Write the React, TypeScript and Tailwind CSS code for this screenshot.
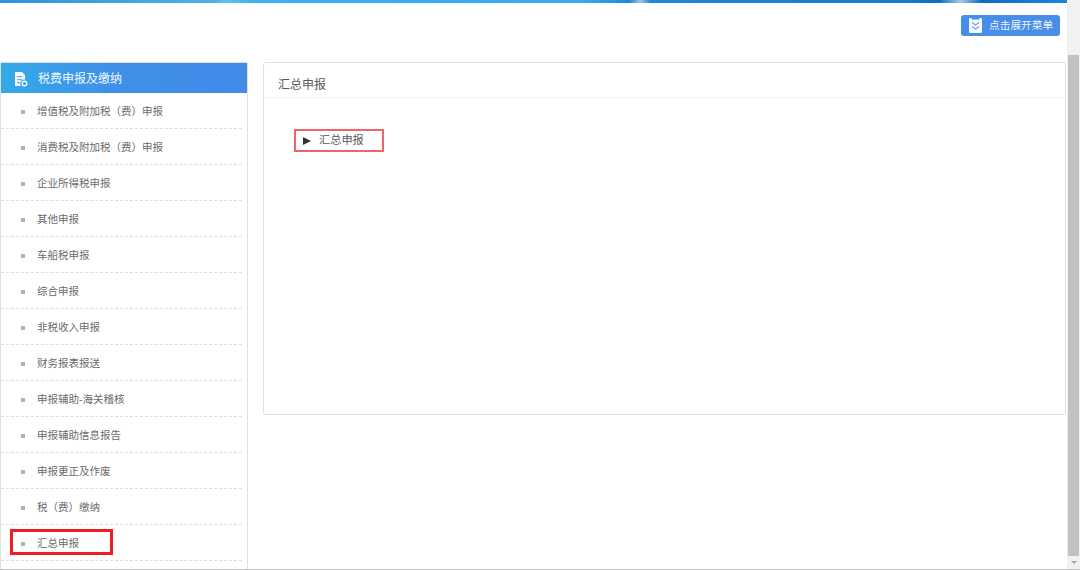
const items = [
  "增值税及附加税（费）申报",
  "消费税及附加税（费）申报",
  "企业所得税申报",
  "其他申报",
  "车船税申报",
  "综合申报",
  "非税收入申报",
  "财务报表报送",
  "申报辅助-海关稽核",
  "申报辅助信息报告",
  "申报更正及作废",
  "税（费）缴纳",
  "汇总申报",
];

const font = "font-['Liberation_Sans','Noto_Sans_CJK_SC',sans-serif]";

function DocIcon() {
  return (
    <svg width="14" height="15" viewBox="0 0 14 15" className="shrink-0">
      <path d="M1 0h7l3 3v4.6A4 4 0 0 0 7 14H1z" fill="#f4faff" />
      <rect x="3" y="4" width="5" height="1.2" fill="#6aaeea" />
      <rect x="3" y="7" width="5" height="1.2" fill="#6aaeea" />
      <rect x="3" y="10" width="3" height="1.2" fill="#6aaeea" />
      <circle cx="10.5" cy="11.5" r="2.3" fill="none" stroke="#f4faff" strokeWidth="1.4" />
    </svg>
  );
}

function ExpandIcon() {
  return (
    <svg width="13" height="15" viewBox="0 0 13 15" className="shrink-0">
      <path d="M1 0h1.5v1.5h8V0H12a1 1 0 0 1 1 1v13a1 1 0 0 1-1 1H1a1 1 0 0 1-1-1V1a1 1 0 0 1 1-1z" fill="#f6faff" />
      <path d="M3 4.5l3.5 2.5L10 4.5M3 8.5l3.5 2.5L10 8.5" fill="none" stroke="#6ea6ec" strokeWidth="1.3" />
    </svg>
  );
}

export default function App() {
  return (
    <div className={`${font} flex h-[570px] w-[1080px] overflow-hidden border-b border-[#c4c4c4] bg-white`}>
      <div className="flex min-w-0 flex-1 flex-col">
        <div className="h-[3px] shrink-0 bg-[linear-gradient(90deg,#2a94de_0%,#4fb0e4_20%,#62bfe8_21%,#3bb0f3_24%,#38a8f0_55%,#1f86d8_59%,#9cc6e6_60%,#1f86d8_61%,#1a78c8_85%,#0f6cbd_88%,#a8c8e8_90%,#0f6cbd_92%,#1a86dc_100%)]" />
        <div className="flex h-[59px] shrink-0 items-start justify-end pr-[7px] pt-[12px]">
          <button className="flex h-[21px] w-[99px] items-center rounded-[3px] bg-[#488ee9] pl-[8px] text-[10.7px] text-[#eaf2fd]">
            <ExpandIcon />
            <span className="ml-[7px] whitespace-nowrap">点击展开菜单</span>
          </button>
        </div>
        <div className="flex min-h-0 flex-1 items-start">
          <aside className="h-[508px] w-[248px] shrink-0 rounded-t-[2px] border-x border-t border-[#dedfe6] bg-white">
            <div className="flex h-[30px] items-center bg-[linear-gradient(90deg,#34aaea,#3f90e8_45%,#428ae8)] pl-[13px] pt-[2px] text-[12px] text-[#eef6fd]">
              <DocIcon />
              <span className="ml-[10px] whitespace-nowrap">税费申报及缴纳</span>
            </div>
            <ul>
              {items.map((t, i) => (
                <li key={i} className="relative mr-[5px] flex h-[36px] items-center border-b border-dashed border-[#dfdfdf] pl-[20px] pt-[2px] text-[10.5px] text-[#6a6a6a]">
                  <span className="h-[4px] w-[4px] shrink-0 bg-[#b0b0b0]" />
                  <span className="ml-[12px] whitespace-nowrap">{t}</span>
                  {i === 12 && (
                    <span className="absolute left-[9px] top-[4px] h-[26px] w-[103px] border-[3px] border-[#ee1c25]" />
                  )}
                </li>
              ))}
            </ul>
          </aside>
          <main className="ml-[15px] mr-[1px] flex h-[353px] min-w-0 flex-1 flex-col rounded-[3px] border border-[#e0e0e0] bg-white">
            <div className="flex h-[35px] shrink-0 items-center border-b border-[#f0f0f0] pl-[14px] pt-[9px] text-[12px] text-[#5a5a5a]">
              汇总申报
            </div>
            <div className="pl-[30px] pt-[31px]">
              <div className="flex h-[23px] w-[90px] items-center border-2 border-[#f0636b] pl-[7px] text-[11.2px] text-[#5a5a5a]">
                <span className="h-0 w-0 border-y-[4.5px] border-l-[8px] border-y-transparent border-l-[#333]" />
                <span className="ml-[8px] whitespace-nowrap">汇总申报</span>
              </div>
            </div>
          </main>
        </div>
      </div>
      <div className="flex w-[13px] shrink-0 flex-col items-center bg-[#f1f1f1]">
        <div className="h-[55px] w-full shrink-0" />
        <div className="h-[501px] w-[11px] shrink-0 bg-[#c1c1c1]" />
        <div className="flex flex-1 items-center justify-center">
          <span className="h-0 w-0 border-x-[3px] border-t-[3px] border-x-transparent border-t-[#a3a3a3]" />
        </div>
      </div>
    </div>
  );
}
